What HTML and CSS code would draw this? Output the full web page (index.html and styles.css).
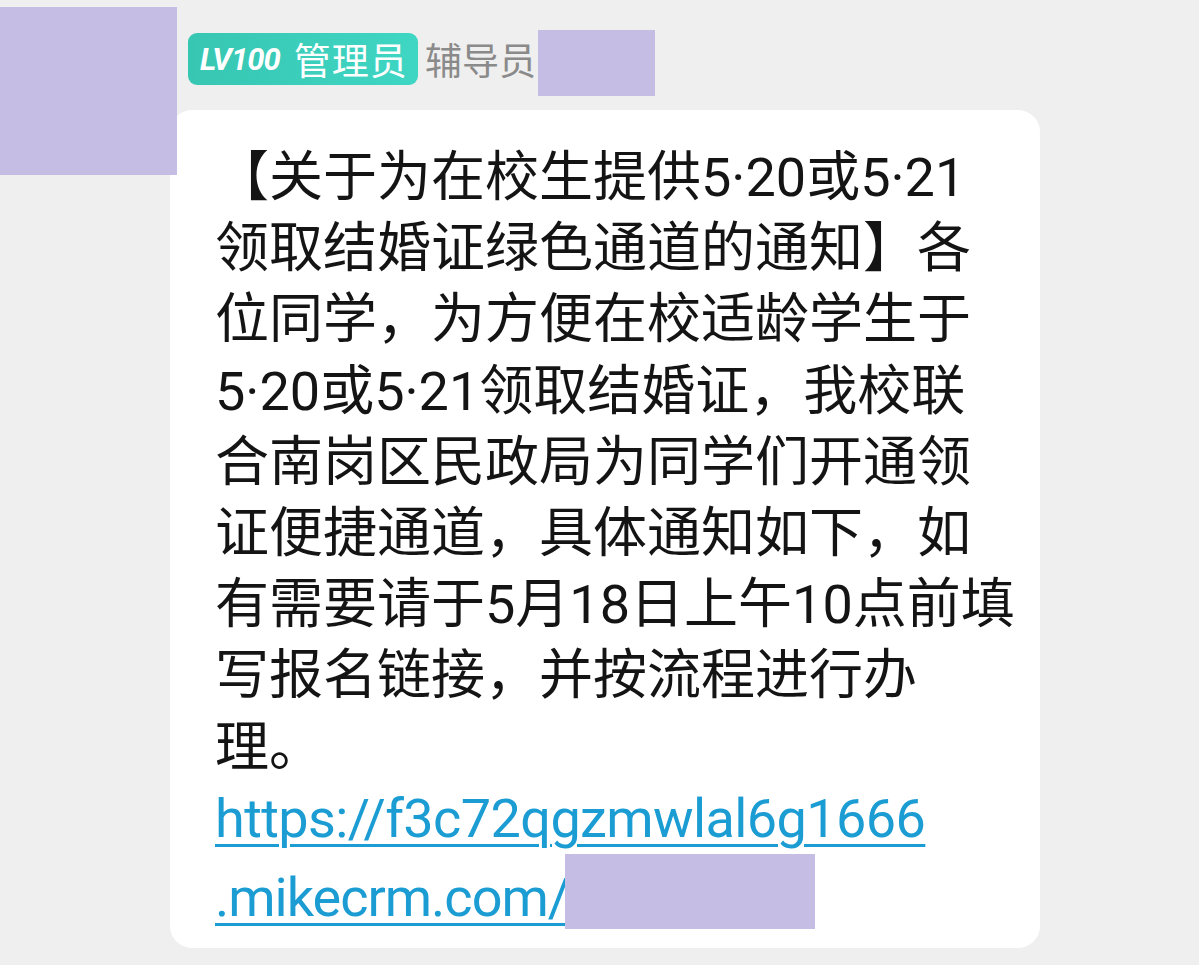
FILE: index.html
```html
<!DOCTYPE html>
<html lang="zh-CN">
<head>
<meta charset="utf-8">
<title>消息</title>
<link rel="stylesheet" href="styles.css">
</head>
<body>
<div class="message">
  <div class="avatar-col">
    <div class="redact avatar"></div>
  </div>
  <div class="content-col">
    <div class="sender">
      <span class="badge"><span class="lv">LV100</span><span class="role">管理员</span></span>
      <span class="name">辅导员</span>
      <span class="redact name-mask"></span>
    </div>
    <div class="bubble">
      <p class="text">【关于为在校生提供5·20或5·21<br>领取结婚证绿色通道的通知】各<br>位同学，为方便在校适龄学生于<br>5·20或5·21领取结婚证，我校联<br>合南岗区民政局为同学们开通领<br>证便捷通道，具体通知如下，如<br>有需要请于5月18日上午10点前填<br>写报名链接，并按流程进行办<br>理。<br><a class="link" href="#">https://f3c72qgzmwlal6g1666<br><span class="link-tail">.mikecrm.com/</span></a><span class="redact link-mask"></span></p>
    </div>
  </div>
</div>
</body>
</html>
```
FILE: styles.css
```css
html, body {
  margin: 0;
  padding: 0;
  background: #efefef;
  width: 1199px;
  height: 965px;
  overflow: hidden;
  font-family: "Noto Sans CJK SC", "Noto Sans", sans-serif;
}

.message {
  display: grid;
  grid-template-columns: 170px 870px;
}

.avatar-col {
  position: relative;
  z-index: 2;
  padding-top: 7px;
}

.redact {
  background: #c6bde4;
}

.avatar {
  width: 177px;
  height: 168px;
}

.content-col {
  display: flex;
  flex-direction: column;
}

.sender {
  display: flex;
  align-items: flex-start;
  height: 110px;
  padding-top: 30px;
  padding-left: 18px;
  box-sizing: border-box;
}

.badge {
  display: inline-flex;
  align-items: center;
  margin-top: 3px;
  height: 52px;
  width: 230px;
  box-sizing: border-box;
  padding-left: 12px;
  border-radius: 9px;
  background: linear-gradient(90deg, #37c6b2 0%, #3fd6c4 100%);
  color: #fff;
}

.lv {
  font-family: "Roboto", "Liberation Sans", sans-serif;
  font-style: italic;
  font-weight: 700;
  font-size: 31px;
  letter-spacing: -1px;
  margin-right: 14px;
}

.role {
  font-size: 37px;
  line-height: 1;
  letter-spacing: 1px;
}

.name {
  font-size: 37px;
  color: #8a8a8a;
  margin-left: 7px;
  margin-top: 3px;
  line-height: 52px;
}

.name-mask {
  width: 117px;
  height: 66px;
  margin-left: 2px;
}

.bubble {
  background: #ffffff;
  border-radius: 22px;
  height: 838px;
  box-sizing: border-box;
  padding: 32px 30px 0 45px;
}

.text {
  margin: 0;
  font-family: "Roboto", "Noto Sans CJK SC", sans-serif;
  font-size: 54px;
  line-height: 71.2px;
  color: #141414;
  white-space: nowrap;
}

.link {
  color: #1b9cd3;
  text-decoration: underline;
  text-decoration-thickness: 3px;
  text-underline-offset: 7px;
  letter-spacing: -0.6px;
  font-family: "Roboto", sans-serif;
}

.link-tail {
  letter-spacing: -1px;
}

.link-mask {
  display: inline-block;
  position: relative;
  width: 250px;
  height: 75px;
  margin-left: -4px;
  vertical-align: -13px;
}
```
